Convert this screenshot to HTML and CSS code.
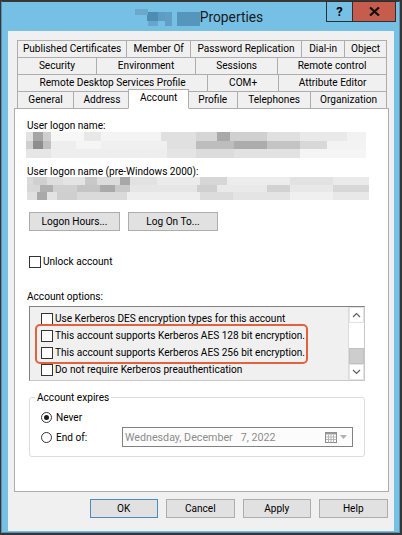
FILE: index.html
```html
<!DOCTYPE html>
<html lang="en">
<head>
  <meta charset="UTF-8" />
  <title>Properties</title>
  <link rel="stylesheet" href="styles.css">
</head>
<body>

  <div class="window">

    <!-- Barra de título -->
    <div class="titlebar">
      <div class="title">
        <span class="masked-name"></span>
        <span>Properties</span>
      </div>
      <div class="caption-buttons">
        <button class="cap help">?</button>
        <button class="cap close">
          <svg width="11" height="9" viewBox="0 0 11 9">
            <path d="M1 0.5 L10 8.5 M10 0.5 L1 8.5" stroke="#111" stroke-width="2.2" fill="none" />
          </svg>
        </button>
      </div>
    </div>

    <div class="client">

      <div class="tabs">
        <div class="tab-row row-1">
          <div class="tab">Published Certificates</div>
          <div class="tab">Member Of</div>
          <div class="tab">Password Replication</div>
          <div class="tab">Dial-in</div>
          <div class="tab">Object</div>
        </div>
        <div class="tab-row row-2">
          <div class="tab">Security</div>
          <div class="tab">Environment</div>
          <div class="tab">Sessions</div>
          <div class="tab">Remote control</div>
        </div>
        <div class="tab-row row-3">
          <div class="tab">Remote Desktop Services Profile</div>
          <div class="tab">COM+</div>
          <div class="tab">Attribute Editor</div>
        </div>
        <div class="tab-row row-4">
          <div class="tab">General</div>
          <div class="tab">Address</div>
          <div class="tab active">Account</div>
          <div class="tab">Profile</div>
          <div class="tab">Telephones</div>
          <div class="tab">Organization</div>
        </div>
      </div>

      <div class="panel">
        <div class="label first">User logon name:</div>
        <div class="masked masked-upn"></div>

        <div class="label second">User logon name (pre-Windows 2000):</div>
        <div class="masked masked-sam"></div>

        <div class="button-row">
          <button class="btn logon-hours">Logon Hours...</button>
          <button class="btn log-on-to">Log On To...</button>
        </div>

        <div class="check unlock"><span class="box"></span>Unlock account</div>

        <div class="label options-label">Account options:</div>
        <div class="listbox">
          <ul class="options">
            <li><span class="box"></span>Use Kerberos DES encryption types for this account</li>
            <li><span class="box"></span>This account supports Kerberos AES 128 bit encryption.</li>
            <li><span class="box"></span>This account supports Kerberos AES 256 bit encryption.</li>
            <li><span class="box"></span>Do not require Kerberos preauthentication</li>
          </ul>
          <div class="scrollbar">
            <div class="arrow">
              <svg width="9" height="6" viewBox="0 0 9 6"><path d="M1 5 L4.5 1.5 L8 5" stroke="#606060" stroke-width="1.2" fill="none" /></svg>
            </div>
            <div class="track"><div class="thumb"></div></div>
            <div class="arrow">
              <svg width="9" height="6" viewBox="0 0 9 6"><path d="M1 1 L4.5 4.5 L8 1" stroke="#606060" stroke-width="1.2" fill="none" /></svg>
            </div>
          </div>
          <!-- marcação vermelha sobre as opções AES -->
          <div class="highlight"></div>
        </div>

        <fieldset class="expires">
          <legend>Account expires</legend>
          <div class="radio-row"><span class="radio checked"></span>Never</div>
          <div class="radio-row">
            <span class="radio"></span>
            <span class="radio-label">End of:</span>
            <div class="datepicker">
              <span class="date-text">Wednesday, December   7, 2022</span>
              <svg class="cal-icon" width="12" height="11" viewBox="0 0 12 11">
                <rect x="0.5" y="0.5" width="11" height="10" fill="#fff" stroke="#8a8a8a" />
                <rect x="0.5" y="0.5" width="11" height="2" fill="#9a9a9a" />
                <path d="M3.5 3 V10.5 M6 3 V10.5 M8.5 3 V10.5 M1 5 H11.5 M1 7.5 H11.5" stroke="#b5b5b5" stroke-width="1" />
              </svg>
              <svg class="drop-icon" width="7" height="4" viewBox="0 0 7 4"><path d="M0 0 H7 L3.5 4 Z" fill="#b0b0b0" /></svg>
            </div>
          </div>
        </fieldset>
      </div>

      <div class="dialog-buttons">
        <button class="btn default">OK</button>
        <button class="btn">Cancel</button>
        <button class="btn">Apply</button>
        <button class="btn">Help</button>
      </div>

    </div>
  </div>

</body>
</html>
```

FILE: styles.css
```css
* {
  box-sizing: border-box;
}

body {
  margin: 0;
  width: 402px;
  height: 535px;
  overflow: hidden;
  background: #363636;
  font-family: Roboto, "Liberation Sans", sans-serif;
  font-size: 10.1px;
  color: #000;
}

button {
  font: inherit;
  color: inherit;
  padding: 0;
}

/* Janela */
.window {
  width: 399px;
  margin: 1px 0 0 1px;
  background: #76c0e6;
  border: 1px solid #5d8fae;
  border-top-color: #3a3a3a;
  padding-bottom: 1px;
}

.titlebar {
  height: 29px;
  display: grid;
  grid-template-columns: 1fr auto 1fr;
  padding-right: 3px;
}

.title {
  grid-column: 2;
  display: flex;
  align-items: center;
  font-size: 13.8px;
  color: #1a1a1a;
}

.masked-name {
  width: 65px;
  height: 18px;
  background:
    linear-gradient(#6ba8cb, #6ba8cb) 0 1px / 13px 6px no-repeat,
    linear-gradient(#4d8db3, #4d8db3) 12px 4px / 11px 9px no-repeat,
    linear-gradient(#67a6ca, #67a6ca) 13px 13px / 10px 5px no-repeat,
    linear-gradient(#5d9dc2, #5d9dc2) 23px 4px / 7px 9px no-repeat,
    linear-gradient(#629fc4, #629fc4) 30px 4px / 7px 14px no-repeat,
    linear-gradient(#5696bc, #5696bc) 42px 4px / 23px 14px no-repeat;
}

.caption-buttons {
  grid-column: 3;
  justify-self: end;
  align-self: start;
  display: flex;
  margin-top: -1px;
}

.cap {
  height: 21px;
  border: 1px solid #2e2e2e;
  display: flex;
  align-items: center;
  justify-content: center;
}

.help {
  width: 27px;
  background: #76c0e6;
  font-weight: bold;
  font-size: 13px;
}

.close {
  width: 44px;
  margin-left: -1px;
  background: #c55c4c;
}

/* Área cliente */
.client {
  height: 500px;
  margin: 0 5px 0 6px;
  background: #f0f0f0;
  padding: 9px 5px 13px 6px;
  display: flex;
  flex-direction: column;
}

.tabs {
  padding: 0 3px;
}

.tab-row {
  display: grid;
  height: 18px;
  margin-bottom: -1px;
}

.row-1 { grid-template-columns: 109.3fr 64fr 111fr 43fr 42fr; }
.row-2 { grid-template-columns: 79fr 99.3fr 82fr 109fr; }
.row-3 { grid-template-columns: 190.3fr 71fr 108fr; }
.row-4 { grid-template-columns: 56fr 57fr 57.6fr 49.7fr 73fr 76fr; }

.tab {
  border: 1px solid #adadad;
  margin-right: -1px;
  background: #f0f0f0;
  text-align: center;
  line-height: 16px;
  white-space: nowrap;
}

.tab.active {
  margin: -2px -2px 0 -2px;
  background: #fff;
  border-bottom-color: #fff;
  line-height: 15px;
  position: relative;
  z-index: 1;
}

.panel {
  flex: 1;
  background: #fff;
  border: 1px solid #adadad;
  padding-left: 14px;
}

.label {
  line-height: 13px;
  margin-left: -2px;
}

.label.first { margin-top: 10px; }
.label.second { margin-top: 7px; }
.options-label { margin-top: 22px; }

/* campos borrados */
.masked {
  background-repeat: no-repeat;
}

.masked-upn {
  width: 340px;
  height: 26px;
  margin-left: -3px;
  background-image:
    linear-gradient(90deg, #e2e2e2 0 7px, #a5a5a5 7px 17px, #cfcfcf 17px 25px, #f7f7f7 25px 58px, #e8e8e8 58px 75px, #f4f4f4 75px 135px, #e0e0e0 135px 170px, #d5d5d5 170px 191px, #a9a9a9 191px 204px, #d0d0d0 204px 241px, #e0e0e0 241px 274px, #e9e9e9 274px 321px, #f2f2f2 321px),
    linear-gradient(90deg, #cfcfcf 0 7px, #8e8e8e 7px 17px, #c0c0c0 17px 25px, #eeeeee 25px 50px, #f5f5f5 50px 75px, #f0f0f0 75px 141px, #e0e0e0 141px 170px, #bdbdbd 170px 208px, #acacac 208px 241px, #c4c4c4 241px 274px, #d8d8d8 274px 301px, #f3f3f3 301px),
    linear-gradient(90deg, #e6e6e6 0 25px, #eeeeee 25px 141px, #e4e4e4 141px 170px, #dcdcdc 170px 208px, #e2e2e2 208px 274px, #f5f5f5 274px);
  background-size: 100% 9px, 100% 8px, 100% 9px;
  background-position: 0 0, 0 9px, 0 17px;
}

.masked-sam {
  width: 342px;
  height: 23px;
  margin: -1px 0 0 -2px;
  background-image:
    linear-gradient(90deg, #dadada 0 6px, #d0d0d0 6px 20px, #dedede 20px 36px, #e4e4e4 36px 58px, #c8c8c8 58px 70px, #dcdcdc 70px 93px, #a8a8a8 93px 103px, #e2e2e2 103px 130px, #ebebeb 130px 173px, #d6d6d6 173px 200px, #ececec 200px 263px, #e2e2e2 263px 306px, #eaeaea 306px),
    linear-gradient(90deg, #d8d8d8 0 13px, #b0b0b0 13px 26px, #d0d0d0 26px 50px, #c4c4c4 50px 73px, #aaaaaa 73px 88px, #c9c9c9 88px 103px, #e6e6e6 103px 170px, #cfcfcf 170px 190px, #e9e9e9 190px 240px, #d2d2d2 240px 263px, #e8e8e8 263px 306px, #d7d7d7 306px),
    linear-gradient(90deg, #e0e0e0 0 10px, #a9a9a9 10px 20px, #e3e3e3 20px 30px, #cfcfcf 30px 50px, #dadada 50px 100px, #eeeeee 100px 173px, #dcdcdc 173px 206px, #e4e4e4 206px 263px, #f0f0f0 263px 306px, #e8e8e8 306px);
  background-size: 100% 8px, 100% 7px, 100% 8px;
  background-position: 0 0, 0 8px, 0 15px;
}

/* Botões */
.btn {
  height: 19px;
  background: #e1e1e1;
  border: 1px solid #adadad;
  text-align: center;
}

.button-row {
  display: flex;
  gap: 8px;
  margin-top: 12px;
}

.logon-hours { width: 91px; }
.log-on-to { width: 90px; }

.check {
  display: flex;
  align-items: center;
  gap: 2px;
  height: 13px;
}

.unlock {
  margin-top: 24px;
}

.box {
  width: 12px;
  height: 12px;
  border: 1px solid #333;
  background: #fff;
  flex-shrink: 0;
}

/* Lista de opções */
.listbox {
  position: relative;
  display: flex;
  width: 336px;
  height: 75px;
  margin-top: 3px;
  background: #f0f0f0;
  border: 1px solid;
  border-color: #828282 #c8c8c8 #c8c8c8 #828282;
}

.options {
  flex: 1;
  list-style: none;
  margin: 0;
  padding: 3px 0 0 11px;
}

.options li {
  height: 17px;
  display: flex;
  align-items: center;
  gap: 2px;
  white-space: nowrap;
}

.scrollbar {
  width: 16px;
  display: flex;
  flex-direction: column;
  background: #fff;
  border-left: 1px solid #dcdcdc;
}

.arrow {
  height: 16px;
  display: flex;
  align-items: center;
  justify-content: center;
  border: 1px solid #e3e3e3;
}

.track {
  flex: 1;
  display: flex;
  flex-direction: column;
  justify-content: flex-end;
}

.thumb {
  height: 16px;
  background: #cdcdcd;
  border: 1px solid #c2c2c2;
}

.highlight {
  position: absolute;
  left: 5px;
  top: 17px;
  width: 273px;
  height: 40px;
  border: 2px solid #e1623d;
  border-radius: 5px;
}

/* Expiração */
.expires {
  width: 336px;
  margin: 10px 0 0 0;
  padding: 3px 0 9px 11px;
  border: 1px solid #dcdcdc;
  border-radius: 3px;
  min-width: 0;
}

.expires legend {
  line-height: 13px;
  padding: 0 2px;
  margin-left: -6px;
}

.radio-row {
  height: 20px;
  display: flex;
  align-items: center;
  gap: 4px;
}

.radio {
  width: 11px;
  height: 11px;
  border: 1px solid #333;
  border-radius: 50%;
  background: #fff;
  display: flex;
  align-items: center;
  justify-content: center;
  flex-shrink: 0;
}

.radio.checked::after {
  content: "";
  width: 5px;
  height: 5px;
  border-radius: 50%;
  background: #1a1a1a;
}

.radio-label {
  width: 66px;
}

.datepicker {
  width: 231px;
  height: 20px;
  margin-left: -4px;
  display: flex;
  align-items: center;
  border: 1px solid #828282;
  background: #fcfcfc;
  padding: 0 5px 0 2px;
}

.date-text {
  flex: 1;
  color: #8c8c8c;
  font-size: 10.7px;
  white-space: pre;
}

.drop-icon {
  margin-left: 3px;
}

.dialog-buttons {
  display: flex;
  justify-content: flex-end;
  gap: 8px;
  margin-top: 7px;
  padding-right: 1.5px;
}

.dialog-buttons .btn {
  width: 68.5px;
}

.btn.default {
  border-color: #4b8bc4;
}
```
